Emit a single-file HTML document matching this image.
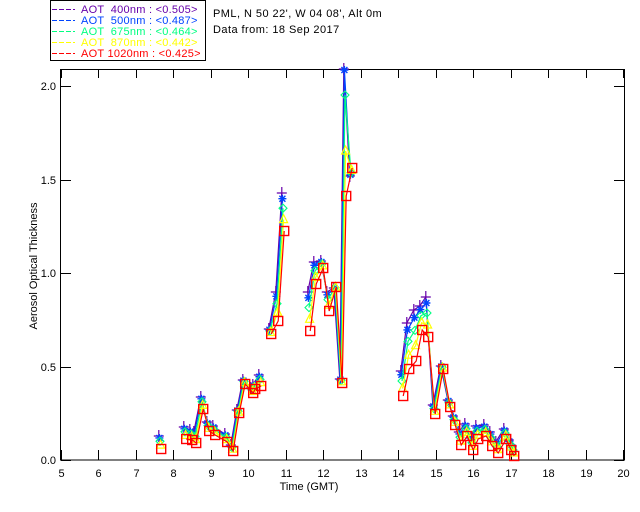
<!DOCTYPE html>
<html><head><meta charset="utf-8"><style>
html,body{margin:0;padding:0;background:#fff;width:640px;height:512px;overflow:hidden}
svg{display:block}
text{font-family:"Liberation Sans",sans-serif;font-size:11px}
</style></head><body>
<svg id="s" width="640" height="512" viewBox="0 0 640 512" xmlns="http://www.w3.org/2000/svg">
<rect x="0" y="0" width="640" height="512" fill="#fff"/>
<rect x="50.5" y="0.5" width="155" height="60" fill="#fff" stroke="#000" stroke-width="1"/>
<g stroke-width="1" stroke-dasharray="5,2">
<line x1="52" y1="9.5" x2="75" y2="9.5" stroke="#6600aa"/>
<line x1="52" y1="20.5" x2="75" y2="20.5" stroke="#0044ff"/>
<line x1="52" y1="31.5" x2="75" y2="31.5" stroke="#00ff80"/>
<line x1="52" y1="42.5" x2="75" y2="42.5" stroke="#ffff00"/>
<line x1="52" y1="53.5" x2="75" y2="53.5" stroke="#ff0000"/>
</g>
<g letter-spacing="0.25">
<text x="81" y="13" fill="#6600aa" xml:space="preserve">AOT  400nm : &lt;0.505&gt;</text>
<text x="81" y="24" fill="#0044ff" xml:space="preserve">AOT  500nm : &lt;0.487&gt;</text>
<text x="81" y="35" fill="#00ff80" xml:space="preserve">AOT  675nm : &lt;0.464&gt;</text>
<text x="81" y="46" fill="#ffff00" xml:space="preserve">AOT  870nm : &lt;0.442&gt;</text>
<text x="81" y="57" fill="#ff0000" xml:space="preserve">AOT 1020nm : &lt;0.425&gt;</text>
</g>
<g letter-spacing="0.45">
<text x="213" y="17" fill="#000">PML, N 50 22', W 04 08', Alt 0m</text>
<text x="213" y="33" fill="#000">Data from: 18 Sep 2017</text>
</g>
<rect x="60.5" y="69.5" width="564" height="390.5" fill="none" stroke="#000" stroke-width="1"/>
<g id="ticks" stroke="#000" stroke-width="1"></g>
<g font-size="11">
<text x="56" y="90" text-anchor="end">2.0</text>
<text x="56" y="184" text-anchor="end">1.5</text>
<text x="56" y="277" text-anchor="end">1.0</text>
<text x="56" y="371" text-anchor="end">0.5</text>
<text x="56" y="464" text-anchor="end">0.0</text>
</g>
<g id="xl" text-anchor="middle"></g>
<text x="309" y="490" text-anchor="middle">Time (GMT)</text>
<text transform="translate(37,266) rotate(-90)" text-anchor="middle" font-size="10">Aerosol Optical Thickness</text>
<g id="data"></g>
</svg>
<script>
var NS="http://www.w3.org/2000/svg";
function el(t,a,p){var e=document.createElementNS(NS,t);for(var k in a)e.setAttribute(k,a[k]);p.appendChild(e);return e;}
var T=document.getElementById('ticks'),XL=document.getElementById('xl');
for(var h=5;h<=20;h++){var x=Math.round(61+37.47*(h-5))+0.5;
 el('line',{x1:x,y1:460,x2:x,y2:450},T);el('line',{x1:x,y1:70,x2:x,y2:78},T);
 var t=el('text',{x:x,y:477},XL);t.textContent=h;}
for(var v=0;v<=2;v+=0.5){var y=Math.round(460-187*v)+0.5;el('line',{x1:61,y1:y,x2:71,y2:y},T);el('line',{x1:624,y1:y,x2:614,y2:y},T);}
var G=[
[[160,449,436]],
[[185,439,427],[191,440,430],[195,443,432],[202,409,397],[208,431,422],[214,435,426],[226,442,434],[232,451,445],[238,413,410],[244,384,380],[252,393,388],[254,389,385],[260,386,375]],
[[270,334,329],[277,321,292],[283,231,193]],
[[309,331,292],[315,284,262],[322,268,261],[328,311,292],[335,287,288],[341,383,379],[345,196,69],[351,168,176]],
[[402,396,371],[408,369,323],[415,361,310],[421,330,306],[427,337,297],[434,414,405],[442,369,366],[449,407,400],[454,425,416],[460,445,432],[466,436,424],[472,450,438],[477,439,426],[485,436,425],[491,446,432],[497,453,442],[505,439,429],[510,450,440],[513,456,446]]
];
var S=[{c:'#6600aa',f:1,m:'+'},{c:'#0044ff',f:0.85,m:'*'},{c:'#00ff80',f:0.6,m:'d'},{c:'#ffff00',f:0.3,m:'t'},{c:'#ff0000',f:0,m:'s'}];
var D=document.getElementById('data');
S.forEach(function(s,si){
 G.forEach(function(g){
  var pts=g.map(function(p){var y=p[1]+(p[2]-p[1])*s.f;
   if(p[0]==345){y=[69,70,95,151,196][si];}
   return [p[0]+si*0.6-1.2,y];});
  if(pts.length>1)el('polyline',{points:pts.map(function(p){return p.join(',')}).join(' '),fill:'none',stroke:s.c,'stroke-width':1.2},D);
  pts.forEach(function(p){var x=p[0],y=p[1];
   if(s.m=='+'){el('path',{d:'M'+(x-5)+' '+y+'h10M'+x+' '+(y-6)+'v12',stroke:s.c,'stroke-width':1.2},D);}
   else if(s.m=='*'){el('path',{d:'M'+(x-4)+' '+y+'h8M'+x+' '+(y-4)+'v8M'+(x-3)+' '+(y-3)+'l6 6M'+(x+3)+' '+(y-3)+'l-6 6',stroke:s.c,'stroke-width':1.4},D);}
   else if(s.m=='d'){el('path',{d:'M'+x+' '+(y-4)+'l4 4l-4 4l-4 -4z',fill:'none',stroke:s.c,'stroke-width':1.1},D);}
   else if(s.m=='t'){el('path',{d:'M'+x+' '+(y-5)+'l4 8h-8z',fill:'none',stroke:s.c,'stroke-width':1.2},D);}
   else {el('rect',{x:x-4.5,y:y-4.5,width:9,height:9,fill:'none',stroke:s.c,'stroke-width':1.4},D);}
  });
 });
});
</script>
</body></html>
